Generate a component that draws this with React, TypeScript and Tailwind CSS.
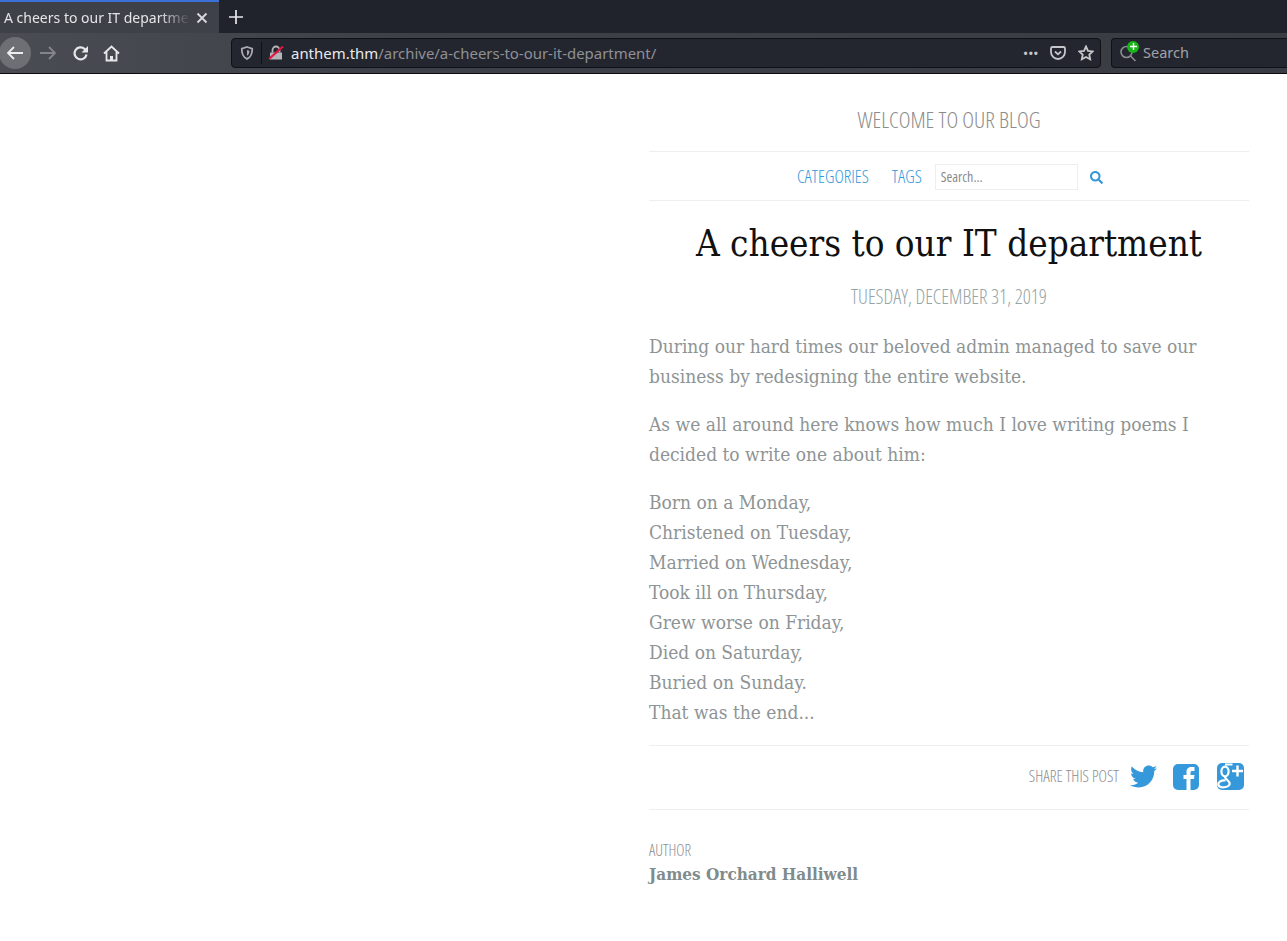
import { FaTwitter, FaSearch } from 'react-icons/fa'

const poem = [
  'Born on a Monday,',
  'Christened on Tuesday,',
  'Married on Wednesday,',
  'Took ill on Thursday,',
  'Grew worse on Friday,',
  'Died on Saturday,',
  'Buried on Sunday.',
  'That was the end...',
]

function BrowserChrome() {
  return (
    <div className="font-['Noto_Sans',sans-serif]">
      <div className="flex h-[33px] bg-[#20232c]">
        <div className="flex h-[33px] w-[219px] items-center border-t-2 border-[#3a70d8] bg-[#3f4148] pl-[4px] pr-[11px]">
          <span className="flex-1 overflow-hidden whitespace-nowrap text-[14px] text-[#e4e5e8] [mask-image:linear-gradient(to_left,transparent,black_30px)]">
            A cheers to our IT department
          </span>
          <svg width="12" height="12" viewBox="0 0 12 12" className="ml-[6px]" stroke="#d8d9dc" strokeWidth="1.8" fill="none">
            <path d="M1.500 1.500l9 9M10.500 1.500l-9 9" />
          </svg>
        </div>
        <div className="ml-[10px] flex items-center">
          <svg width="14" height="14" viewBox="0 0 14 14" stroke="#e8e9eb" strokeWidth="1.700" fill="none">
            <path d="M7 0v14M0 7h14" />
          </svg>
        </div>
      </div>
      <div className="flex h-[41px] items-center border-b border-[#0c0c0f] bg-[linear-gradient(to_right,#4a4c53,#3f4149_30%,#3a3c44)]">
        <div className="ml-[-1px] flex h-[32px] w-[32px] items-center justify-center rounded-full bg-[#6e6f74]">
          <svg width="18" height="16" viewBox="0 0 18 16" stroke="#eceded" strokeWidth="1.800" fill="none">
            <path d="M17 8H2M8 2L2 8l6 6" />
          </svg>
        </div>
        <svg width="18" height="16" viewBox="0 0 18 16" stroke="#83858a" strokeWidth="1.800" fill="none" className="ml-[8px]">
          <path d="M1 8h15M10 2l6 6-6 6" />
        </svg>
        <svg width="17" height="16" viewBox="0 0 17 16" stroke="#e6e7e9" strokeWidth="2.200" fill="none" className="ml-[15px]">
          <path d="M14.500 9.500A6 6 0 1 1 12.500 3.800L14.500 6" />
          <path d="M16 1v6.500H9.500z" fill="#e6e7e9" stroke="none" />
        </svg>
        <svg width="17" height="17" viewBox="0 0 17 17" stroke="#e6e7e9" strokeWidth="1.800" fill="none" className="ml-[14px]">
          <path d="M1 8.500L8.500 1.500 16 8.500M3.500 7v8.500h10V7" />
          <path d="M7 15.500v-4.500h3v4.500" fill="#e6e7e9" stroke="none" />
        </svg>
        <div className="ml-[111px] flex h-[30px] w-[870px] items-center rounded-[4px] border border-[#101114] bg-[#24262f]">
          <svg width="14" height="14" viewBox="0 0 14 14" className="ml-[8px]" stroke="#a9abb0" strokeWidth="1.800" fill="none">
            <path d="M7 1l5.200 1.600c.2 5-1.600 8.600-5.200 10.300C3.400 11.200 1.600 7.600 1.800 2.600z" />
            <path d="M7 4l2.400.7c0 2.400-.8 4-2.400 5z" fill="#a9abb0" stroke="none" />
          </svg>
          <div className="ml-[7px] h-[22px] w-px bg-[#0f1013]" />
          <svg width="16" height="16" viewBox="0 0 16 16" className="ml-[6px]" fill="none">
            <path d="M2 7.500h12v7H2z" fill="#b4b5b9" />
            <path d="M4.500 7.500V5a3.500 3.500 0 0 1 7 0v2.500" stroke="#b4b5b9" strokeWidth="1.800" />
            <path d="M1 14L15 1.500" stroke="#e4163f" strokeWidth="2.200" />
          </svg>
          <span className="ml-[7px] flex-1 text-[14.950px] leading-none text-[#e9eaec]">
            anthem.thm<span className="text-[#8f9196]">/archive/a-cheers-to-our-it-department/</span>
          </span>
          <span className="text-[11px] font-bold tracking-[1px] text-[#c6c7cb]">•••</span>
          <svg width="16" height="16" viewBox="0 0 16 16" className="ml-[11px]" stroke="#c6c7cb" strokeWidth="1.800" fill="none">
            <path d="M2.500 2h11A1.500 1.500 0 0 1 15 3.500V7A7 7 0 0 1 1 7V3.500A1.500 1.500 0 0 1 2.500 2z" />
            <path d="M5 6.500l3 2.800 3-2.800" />
          </svg>
          <svg width="16" height="16" viewBox="0 0 16 16" className="ml-[12px] mr-[6px]" stroke="#c6c7cb" strokeWidth="1.800" fill="none">
            <path d="M8 1.500l2 4.300 4.700.6-3.400 3.200.9 4.700L8 12l-4.200 2.300.9-4.700L1.300 6.400 6 5.800z" />
          </svg>
        </div>
        <div className="ml-[10px] flex h-[30px] flex-1 items-center rounded-l-[4px] border border-r-0 border-[#101114] bg-[#24262f]">
          <div className="relative ml-[8px] h-[17px] w-[17px]">
            <svg width="17" height="17" viewBox="0 0 17 17" stroke="#8a8c91" strokeWidth="1.600" fill="none">
              <circle cx="6.500" cy="7" r="5.500" />
              <path d="M10.500 11l5 5" />
            </svg>
            <div className="absolute left-[7px] top-[-4px] flex h-[12px] w-[12px] items-center justify-center rounded-full bg-[#17b517]">
              <svg width="7" height="7" viewBox="0 0 7 7" stroke="#fff" strokeWidth="1.400">
                <path d="M3.500 0v7M0 3.500h7" />
              </svg>
            </div>
          </div>
          <span className="ml-[6px] text-[14.500px] text-[#a0a2a7]">Search</span>
        </div>
      </div>
    </div>
  )
}

function FacebookIcon() {
  return (
    <svg width="26" height="26" viewBox="0 0 26 26" className="ml-[16px]">
      <rect width="26" height="26" rx="5" fill="#3498db" />
      <path d="M13.500 26V15h-3v-4h3V8c0-3.500 2-5 5-5h3v4h-2c-1.500 0-2 .6-2 2v2h4l-.6 4h-3.400v11z" fill="#fff" />
    </svg>
  )
}

function GooglePlusIcon() {
  return (
    <svg width="27" height="27" viewBox="0 0 27 27" className="ml-[18px]">
      <rect width="27" height="27" rx="5" fill="#3498db" />
      <ellipse cx="8" cy="8.500" rx="3.600" ry="4.800" fill="none" stroke="#fff" strokeWidth="2.200" />
      <path d="M8 1.500h7.500" stroke="#fff" strokeWidth="2" fill="none" />
      <path d="M8.500 13.500c-2 2 5.500 4.500 4 8-1 3-9.500 4-11 .8-1.200-3 3-5.500 7-4.800" fill="none" stroke="#fff" strokeWidth="2.200" />
      <path d="M20.500 2.500v11M15 8h11" stroke="#fff" strokeWidth="2.400" fill="none" />
    </svg>
  )
}

export default function App() {
  return (
    <div className="min-h-[941px] bg-white">
      <BrowserChrome />
      <div className="flex justify-end pr-[38px]">
        <div className="w-[600px]">
          <div className="h-[78px] border-b border-[#eeeeee] pt-[32px] text-center font-['Open_Sans',sans-serif] text-[22.400px] leading-[28px] text-[#8c8c8c] [font-stretch:75%]">
            <span className="font-light">WELCOME TO OUR BLOG</span>
          </div>
          <div className="flex h-[49px] items-center border-b border-[#eeeeee] pl-[148px] font-['Open_Sans',sans-serif] [font-stretch:75%]">
            <a className="text-[17.800px] font-light text-[#3498db]">CATEGORIES</a>
            <a className="ml-[23px] text-[17.800px] font-light text-[#3498db]">TAGS</a>
            <div className="ml-[13px] mt-[1px] flex h-[26px] w-[143px] items-center border border-[#eeeeee] pl-[5px] text-[14px] text-[#8a8a8a]">
              Search...
            </div>
            <FaSearch className="ml-[12px] mt-[3px] text-[13px] text-[#3498db]" />
          </div>
          <h1 className="mt-[19px] text-center font-['DejaVu_Serif',serif] text-[36.500px] leading-[48px] text-[#111111] [font-stretch:condensed]">
            A cheers to our IT department
          </h1>
          <div className="mt-[15px] text-center font-['Open_Sans',sans-serif] text-[19.800px] font-light leading-[28px] text-[#95a5a6] [font-stretch:75%]">
            TUESDAY, DECEMBER 31, 2019
          </div>
          <div className="mt-[10px] font-['DejaVu_Serif',serif] text-[19px] leading-[30px] text-[#8e9495] [font-stretch:condensed]">
            <p className="pt-[10px]">During our hard times our beloved admin managed to save our business by redesigning the entire website.</p>
            <p className="mt-[18px]">As we all around here knows how much I love writing poems I decided to write one about him:</p>
            <p className="mt-[18px]">
              {poem.map(line => (
                <span key={line} className="block">{line}</span>
              ))}
            </p>
          </div>
          <div className="mt-[18px] flex h-[65px] items-center justify-end border-y border-[#eeeeee] pb-[2px] pr-[5px]">
            <span className="mb-[2px] font-['Open_Sans',sans-serif] text-[16px] font-light text-[#8c8c8c] [font-stretch:75%]">SHARE THIS POST</span>
            <FaTwitter className="ml-[11px] text-[27px] text-[#3498db]" />
            <FacebookIcon />
            <GooglePlusIcon />
          </div>
          <div className="mt-[29px] font-['Open_Sans',sans-serif] text-[15.500px] font-light leading-[22px] text-[#8c8c8c] [font-stretch:75%]">AUTHOR</div>
          <div className="font-['DejaVu_Serif',serif] text-[17px] font-bold leading-[26px] text-[#7f8c8d] [font-stretch:condensed]">James Orchard Halliwell</div>
        </div>
      </div>
    </div>
  )
}
